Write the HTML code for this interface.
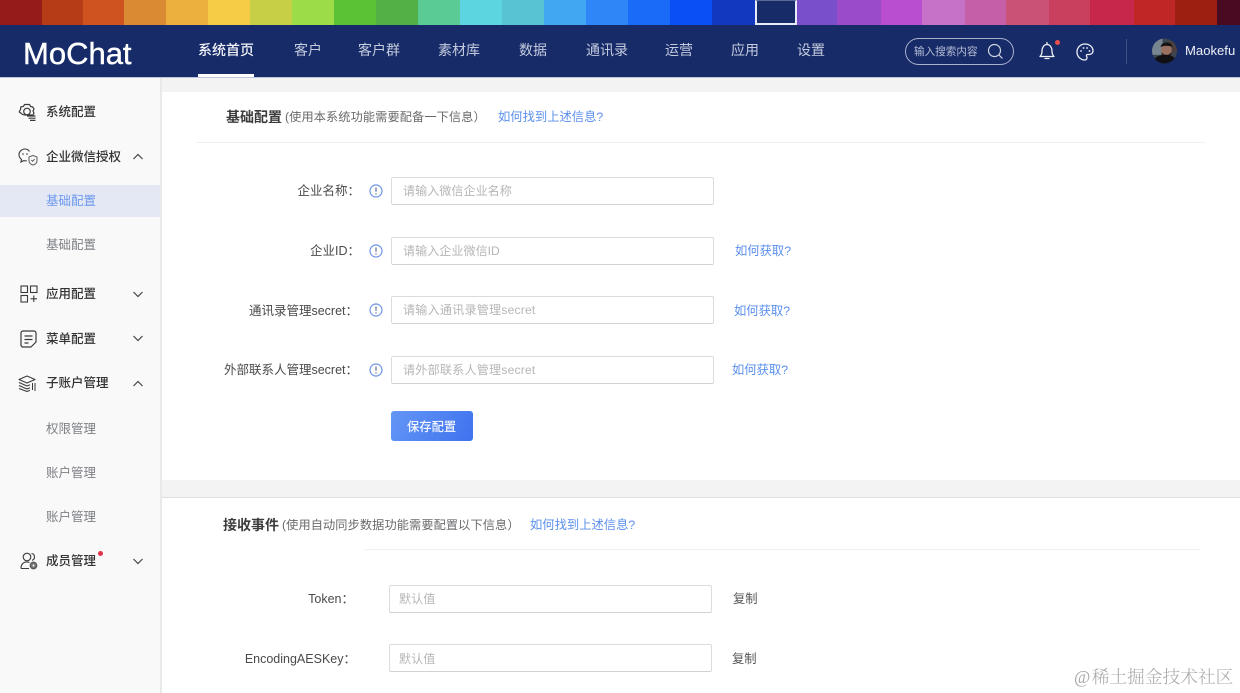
<!DOCTYPE html>
<html lang="zh"><head><meta charset="utf-8"><title>MoChat</title>
<style>
*{box-sizing:border-box}
html,body{margin:0;padding:0}
html{background:#fff}
body{width:1240px;height:693px;overflow:hidden;position:relative;background:#fff;font-family:"Liberation Sans","Noto Sans CJK SC",sans-serif;color:#444;filter:blur(.35px)}
.a{position:absolute}
.t{position:absolute;white-space:nowrap;line-height:20px;height:20px}
.sw{position:absolute;top:0;height:25px}
.nav{font-size:14px;color:#c4cbdd;top:40px}
.p{font-size:12.5px;color:#333;font-weight:500;left:46px}
.c{font-size:12.5px;color:#7d7f85;left:46px}
.lb{font-size:12.5px;color:#4a4a4a;text-align:right;width:193px}
.inp{position:absolute;height:28px;background:#fff;border:1px solid #dcdcdc;border-bottom-color:#d2d2d2;border-radius:2px;width:323px}
.ph{font-size:12.1px;color:#b6b6b8}
.lk{font-size:12.3px;color:#5a8fee}
svg{position:absolute;overflow:visible}
</style></head><body>

<div class="sw" style="left:0;width:43px;background:#951a1a"></div>
<div class="sw" style="left:42px;width:42px;background:#b63c17"></div>
<div class="sw" style="left:83px;width:42px;background:#cf5320"></div>
<div class="sw" style="left:124px;width:43px;background:#d98a33"></div>
<div class="sw" style="left:166px;width:43px;background:#ecb03c"></div>
<div class="sw" style="left:208px;width:43px;background:#f6cb45"></div>
<div class="sw" style="left:250px;width:43px;background:#c7cf47"></div>
<div class="sw" style="left:292px;width:43px;background:#9cdc48"></div>
<div class="sw" style="left:334px;width:43px;background:#5bc236"></div>
<div class="sw" style="left:376px;width:43px;background:#52b047"></div>
<div class="sw" style="left:418px;width:43px;background:#5bcb95"></div>
<div class="sw" style="left:460px;width:43px;background:#5cd5e0"></div>
<div class="sw" style="left:502px;width:43px;background:#57c3d3"></div>
<div class="sw" style="left:544px;width:43px;background:#41a7f3"></div>
<div class="sw" style="left:586px;width:43px;background:#2f86f6"></div>
<div class="sw" style="left:628px;width:43px;background:#1a6cf8"></div>
<div class="sw" style="left:670px;width:43px;background:#0a4ff5"></div>
<div class="sw" style="left:712px;width:43px;background:#1338c0"></div>
<div class="sw" style="left:796px;width:42px;background:#7a4fcc"></div>
<div class="sw" style="left:837px;width:44px;background:#9a4cc8"></div>
<div class="sw" style="left:881px;width:41px;background:#b94fd0"></div>
<div class="sw" style="left:922px;width:43px;background:#c572c8"></div>
<div class="sw" style="left:965px;width:41px;background:#c55fa8"></div>
<div class="sw" style="left:1006px;width:43px;background:#cb5277"></div>
<div class="sw" style="left:1049px;width:41px;background:#c9405f"></div>
<div class="sw" style="left:1090px;width:44px;background:#c6274a"></div>
<div class="sw" style="left:1134px;width:41px;background:#bf2626"></div>
<div class="sw" style="left:1175px;width:42px;background:#9c1f12"></div>
<div class="sw" style="left:1217px;width:23px;background:#4a0a22"></div>
<div class="sw" style="left:755px;width:42px;background:#172b69;border:2px solid #e6ebf5;border-top:1px solid #5a6a94"></div>

<div class="a" style="left:0;top:25px;width:1240px;height:52px;background:#172b69"></div>
<div class="a" style="left:0;top:77px;width:1240px;height:1px;background:#bcc5dc"></div>
<div class="t" style="left:23px;top:38px;height:32px;line-height:32px;font-size:31px;color:#fff;-webkit-text-stroke:.4px #fff">MoChat</div>
<div class="t nav" style="left:198px;color:#f2f4f8;font-weight:500">系统首页</div>
<div class="a" style="left:198px;top:74px;width:56px;height:3px;background:#fff"></div>
<div class="t nav" style="left:294px">客户</div>
<div class="t nav" style="left:358px">客户群</div>
<div class="t nav" style="left:438px">素材库</div>
<div class="t nav" style="left:519px">数据</div>
<div class="t nav" style="left:586px">通讯录</div>
<div class="t nav" style="left:665px">运营</div>
<div class="t nav" style="left:731px">应用</div>
<div class="t nav" style="left:797px">设置</div>

<div class="a" style="left:905px;top:38px;width:109px;height:27px;border:1px solid #a9b2cb;border-radius:14px"></div>
<div class="t" style="left:914px;top:42px;font-size:10.6px;color:#b4bcd2">输入搜索内容</div>
<svg style="left:986px;top:42px" width="18" height="18" viewBox="0 0 18 18" fill="none" stroke="#d3d8e6" stroke-width="1.2"><circle cx="8.5" cy="8.5" r="6"/><path d="M13 13l3.5 3.5"/></svg>
<svg style="left:1038px;top:41px" width="18" height="20" viewBox="0 0 18 20" fill="none" stroke="#eef0f6" stroke-width="1.3"><path d="M2 15.5c1.6-1.4 2-3 2-5.500 0-3.400 2-6.500 5-6.500s5 3.100 5 6.500c0 2.500.4 4.100 2 5.500z" stroke-linejoin="round"/><path d="M9 1.500v2M7 17.500h4" stroke-linecap="round"/></svg>
<div class="a" style="left:1055px;top:40px;width:5px;height:5px;border-radius:50%;background:#e8504f"></div>
<svg style="left:1076px;top:43px" width="18" height="18" viewBox="0 0 18 18" fill="none" stroke="#eef0f6" stroke-width="1.3"><path d="M9 1c4.500 0 8 3 8 6.800 0 2.600-2 3.700-4 3.700h-1.500c-1 0-1.500 1.200-.8 2 .7.900.2 3.500-1.700 3.500C4.500 17 1 13.500 1 9s3.500-8 8-8z"/><circle cx="5" cy="8" r=".9" fill="#eef0f6" stroke="none"/><circle cx="7.500" cy="5" r=".9" fill="#eef0f6" stroke="none"/><circle cx="11" cy="5" r=".9" fill="#eef0f6" stroke="none"/><circle cx="13.500" cy="8" r=".9" fill="#eef0f6" stroke="none"/></svg>
<div class="a" style="left:1126px;top:39px;width:1px;height:25px;background:#3f5185"></div>
<svg style="left:1152px;top:38px" width="25" height="26" viewBox="0 0 26 26"><defs><clipPath id="av"><circle cx="13" cy="13" r="13"/></clipPath></defs><g clip-path="url(#av)"><rect width="26" height="26" fill="#3d4650"/><rect width="11" height="17" fill="#76858f"/><rect x="18" width="8" height="14" fill="#4b3f3c"/><ellipse cx="15" cy="12" rx="5.500" ry="6.500" fill="#9a7060"/><path d="M9 9c0-6 12-7 12 0-3-2-9-2-12 0z" fill="#141212"/><path d="M10 14c2 4 8 4 10 0v4l-5 2-5-2z" fill="#2c201d"/><path d="M0 26c1-6 7-9 14-9s11 3 12 9z" fill="#101014"/></g></svg>
<div class="t" style="left:1185px;top:41px;font-size:13.100px;color:#eef0f6;font-weight:500">Maokefu</div>

<div class="a" style="left:0;top:78px;width:160px;height:615px;background:#f9f9fa"></div>
<div class="a" style="left:160px;top:78px;width:2px;height:615px;background:#e9e9ea"></div>
<div class="a" style="left:162px;top:78px;width:1078px;height:14px;background:#f3f3f4"></div>
<div class="a" style="left:162px;top:480px;width:1078px;height:17px;background:#f3f3f4"></div>
<div class="a" style="left:162px;top:497px;width:1078px;height:1px;background:#dfdfdf"></div>
<div class="a" style="left:0;top:185px;width:160px;height:32px;background:#e4e8f4"></div>

<svg style="left:18px;top:103px" width="19" height="19" viewBox="0 0 19 19" fill="none" stroke="#3a3a3a" stroke-width="1.200" stroke-linejoin="round"><path d="M6.500 1.500h5l1 2 2.200.4 1.300 2.100-1 2 1 2.200-1 1.800H8c-2.500 0-4-.5-4.500-1.500L1.200 9l1.300-2.500L2.800 4 5.500 3.300z"/><circle cx="9" cy="8.500" r="3.300"/><path d="M9 13h8.500M10.500 15.200h7M12 17.400h5.500"/></svg>
<svg style="left:18px;top:148px" width="20" height="18" viewBox="0 0 20 18" fill="none" stroke="#3a3a3a" stroke-width="1.100"><path d="M11.500 3.500C10.500 2 8.800 1 7 1 3.700 1 1 3.600 1 6.800c0 2 1 3.500 2.500 4.700L3 14l2.700-1.400c.8.200 2 .3 3 .2"/><circle cx="5" cy="6" r=".8" fill="#3a3a3a" stroke="none"/><circle cx="9" cy="6" r=".8" fill="#3a3a3a" stroke="none"/><path d="M15 7.500l4 1.500v3.500c0 2.500-2 4-4 4.500-2-.5-4-2-4-4.500V9z" stroke="#666"/><path d="M13.300 12l1.300 1.300 2-2.300" stroke="#666"/></svg>
<svg style="left:20px;top:285px" width="18" height="18" viewBox="0 0 18 18" fill="none" stroke="#3a3a3a" stroke-width="1.100"><rect x="1" y="1" width="6.500" height="6.500"/><rect x="10.500" y="1" width="6.500" height="6.500"/><rect x="1" y="10.500" width="6.500" height="6.500"/><path d="M10.500 13.800h6.500M13.800 10.500V17"/></svg>
<svg style="left:20px;top:330px" width="17" height="18" viewBox="0 0 17 18" fill="none" stroke="#3a3a3a" stroke-width="1.200" stroke-linejoin="round"><path d="M3 1h11a2 2 0 0 1 2 2v9l-5 5H3a2 2 0 0 1-2-2V3a2 2 0 0 1 2-2z"/><path d="M4.500 6h8M4.500 9.500h8M4.500 13h4"/></svg>
<svg style="left:18px;top:375px" width="19" height="17" viewBox="0 0 19 17" fill="none" stroke="#3a3a3a" stroke-width="1.100" stroke-linejoin="round"><path d="M9 1l8 3.500L9 8 1 4.500z"/><path d="M1 7.500L9 11l3-1.300M1 10.500L9 14l3-1.300M1 13.500L9 16.500l3-1.200"/><path d="M14.500 8v7M17 8v8" stroke-width="1"/></svg>
<svg style="left:20px;top:552px" width="18" height="18" viewBox="0 0 18 18" fill="none" stroke="#3a3a3a" stroke-width="1.100"><circle cx="7" cy="5" r="3.800"/><path d="M1 16.500c0-4.500 2.500-6.500 6-6.500 1 0 1.800.2 2.500.5M1 16.500h8"/><path d="M11.500 1.500c2 .2 3 1.700 3 3.500s-1 2.800-2.500 3.300"/><circle cx="13.500" cy="13.500" r="3.300" fill="#777" stroke="#555"/><circle cx="13.500" cy="13.500" r="1" fill="#f9f9fa" stroke="none"/></svg>

<div class="t p" style="top:102px">系统配置</div>
<div class="t p" style="top:147px">企业微信授权</div>
<div class="t c" style="top:191px;color:#6c98ee">基础配置</div>
<div class="t c" style="top:235px">基础配置</div>
<div class="t p" style="top:284px">应用配置</div>
<div class="t p" style="top:329px">菜单配置</div>
<div class="t p" style="top:373px">子账户管理</div>
<div class="t c" style="top:419px">权限管理</div>
<div class="t c" style="top:463px">账户管理</div>
<div class="t c" style="top:507px">账户管理</div>
<div class="t p" style="top:551px">成员管理</div>
<div class="a" style="left:98px;top:551px;width:5px;height:5px;border-radius:50%;background:#e2344a"></div>

<svg style="left:133px;top:153px" width="10" height="7" fill="none" stroke="#444" stroke-width="1.200"><path d="M.5 6L5 1.500 9.500 6"/></svg>
<svg style="left:133px;top:291px" width="10" height="7" fill="none" stroke="#444" stroke-width="1.200"><path d="M.5 1L5 5.500 9.500 1"/></svg>
<svg style="left:133px;top:335px" width="10" height="7" fill="none" stroke="#444" stroke-width="1.200"><path d="M.5 1L5 5.500 9.500 1"/></svg>
<svg style="left:133px;top:380px" width="10" height="7" fill="none" stroke="#444" stroke-width="1.200"><path d="M.5 6L5 1.500 9.500 6"/></svg>
<svg style="left:133px;top:558px" width="10" height="7" fill="none" stroke="#444" stroke-width="1.200"><path d="M.5 1L5 5.500 9.500 1"/></svg>

<div class="t" style="left:226px;top:107px;font-size:14px;font-weight:700;color:#3c3c3e">基础配置</div>
<div class="t" style="left:285px;top:107px;font-size:12.200px;letter-spacing:.1px;color:#6a6a6c">(使用本系统功能需要配备一下信息）</div>
<div class="t lk" style="left:498px;top:107px">如何找到上述信息?</div>
<div class="a" style="left:196px;top:142px;width:1009px;height:1px;background:#f0f0f0"></div>

<div class="t lb" style="left:167px;top:181px">企业名称：</div>
<div class="t lb" style="left:167px;top:241px">企业ID：</div>
<div class="t lb" style="left:165px;top:301px">通讯录管理secret：</div>
<div class="t lb" style="left:165px;top:360px">外部联系人管理secret：</div>

<svg style="left:369px;top:184px" width="14" height="14" fill="none" stroke="#6d93e6" stroke-width="1.200"><circle cx="7" cy="7" r="6"/><path d="M7 3.500v4.200M7 9.300v1.200" stroke="#5a6f9c"/></svg>
<svg style="left:369px;top:244px" width="14" height="14" fill="none" stroke="#6d93e6" stroke-width="1.200"><circle cx="7" cy="7" r="6"/><path d="M7 3.500v4.200M7 9.300v1.200" stroke="#5a6f9c"/></svg>
<svg style="left:369px;top:303px" width="14" height="14" fill="none" stroke="#6d93e6" stroke-width="1.200"><circle cx="7" cy="7" r="6"/><path d="M7 3.500v4.200M7 9.300v1.200" stroke="#5a6f9c"/></svg>
<svg style="left:369px;top:363px" width="14" height="14" fill="none" stroke="#6d93e6" stroke-width="1.200"><circle cx="7" cy="7" r="6"/><path d="M7 3.500v4.200M7 9.300v1.200" stroke="#5a6f9c"/></svg>

<div class="inp" style="left:391px;top:177px"></div>
<div class="inp" style="left:391px;top:237px"></div>
<div class="inp" style="left:391px;top:296px"></div>
<div class="inp" style="left:391px;top:356px"></div>
<div class="t ph" style="left:403px;top:181px">请输入微信企业名称</div>
<div class="t ph" style="left:403px;top:241px">请输入企业微信ID</div>
<div class="t ph" style="left:403px;top:300px;letter-spacing:.2px">请输入通讯录管理secret</div>
<div class="t ph" style="left:403px;top:360px;letter-spacing:.2px">请外部联系人管理secret</div>
<div class="t lk" style="left:735px;top:241px">如何获取?</div>
<div class="t lk" style="left:734px;top:301px">如何获取?</div>
<div class="t lk" style="left:732px;top:360px">如何获取?</div>

<div class="a" style="left:391px;top:411px;width:82px;height:30px;border-radius:3px;background:linear-gradient(120deg,#6496f6,#3f72ee)"></div>
<div class="t" style="left:407px;top:417px;font-size:12.300px;color:#f4f7ff;font-weight:500">保存配置</div>

<div class="t" style="left:223px;top:515px;font-size:14px;font-weight:700;color:#3c3c3e">接收事件</div>
<div class="t" style="left:282px;top:515px;font-size:12.200px;letter-spacing:.1px;color:#6a6a6c">(使用自动同步数据功能需要配置以下信息）</div>
<div class="t lk" style="left:530px;top:515px">如何找到上述信息?</div>
<div class="a" style="left:365px;top:549px;width:835px;height:1px;background:#f0f0f0"></div>

<div class="t lb" style="top:589px;left:161px">Token：</div>
<div class="t lb" style="top:649px;left:163px">EncodingAESKey：</div>
<div class="inp" style="left:389px;top:585px"></div>
<div class="inp" style="left:389px;top:644px"></div>
<div class="t ph" style="left:399px;top:589px">默认值</div>
<div class="t ph" style="left:399px;top:649px">默认值</div>
<div class="t" style="left:733px;top:589px;font-size:12.300px;color:#555">复制</div>
<div class="t" style="left:732px;top:649px;font-size:12.300px;color:#555">复制</div>

<div class="t" style="left:1074px;top:665px;height:24px;line-height:24px;font-size:17.700px;font-weight:300;font-family:'Liberation Serif','Noto Serif CJK SC',serif;color:#a9a9a9"><span style="letter-spacing:1.500px">@</span>稀土掘金技术社区</div>
</body></html>
